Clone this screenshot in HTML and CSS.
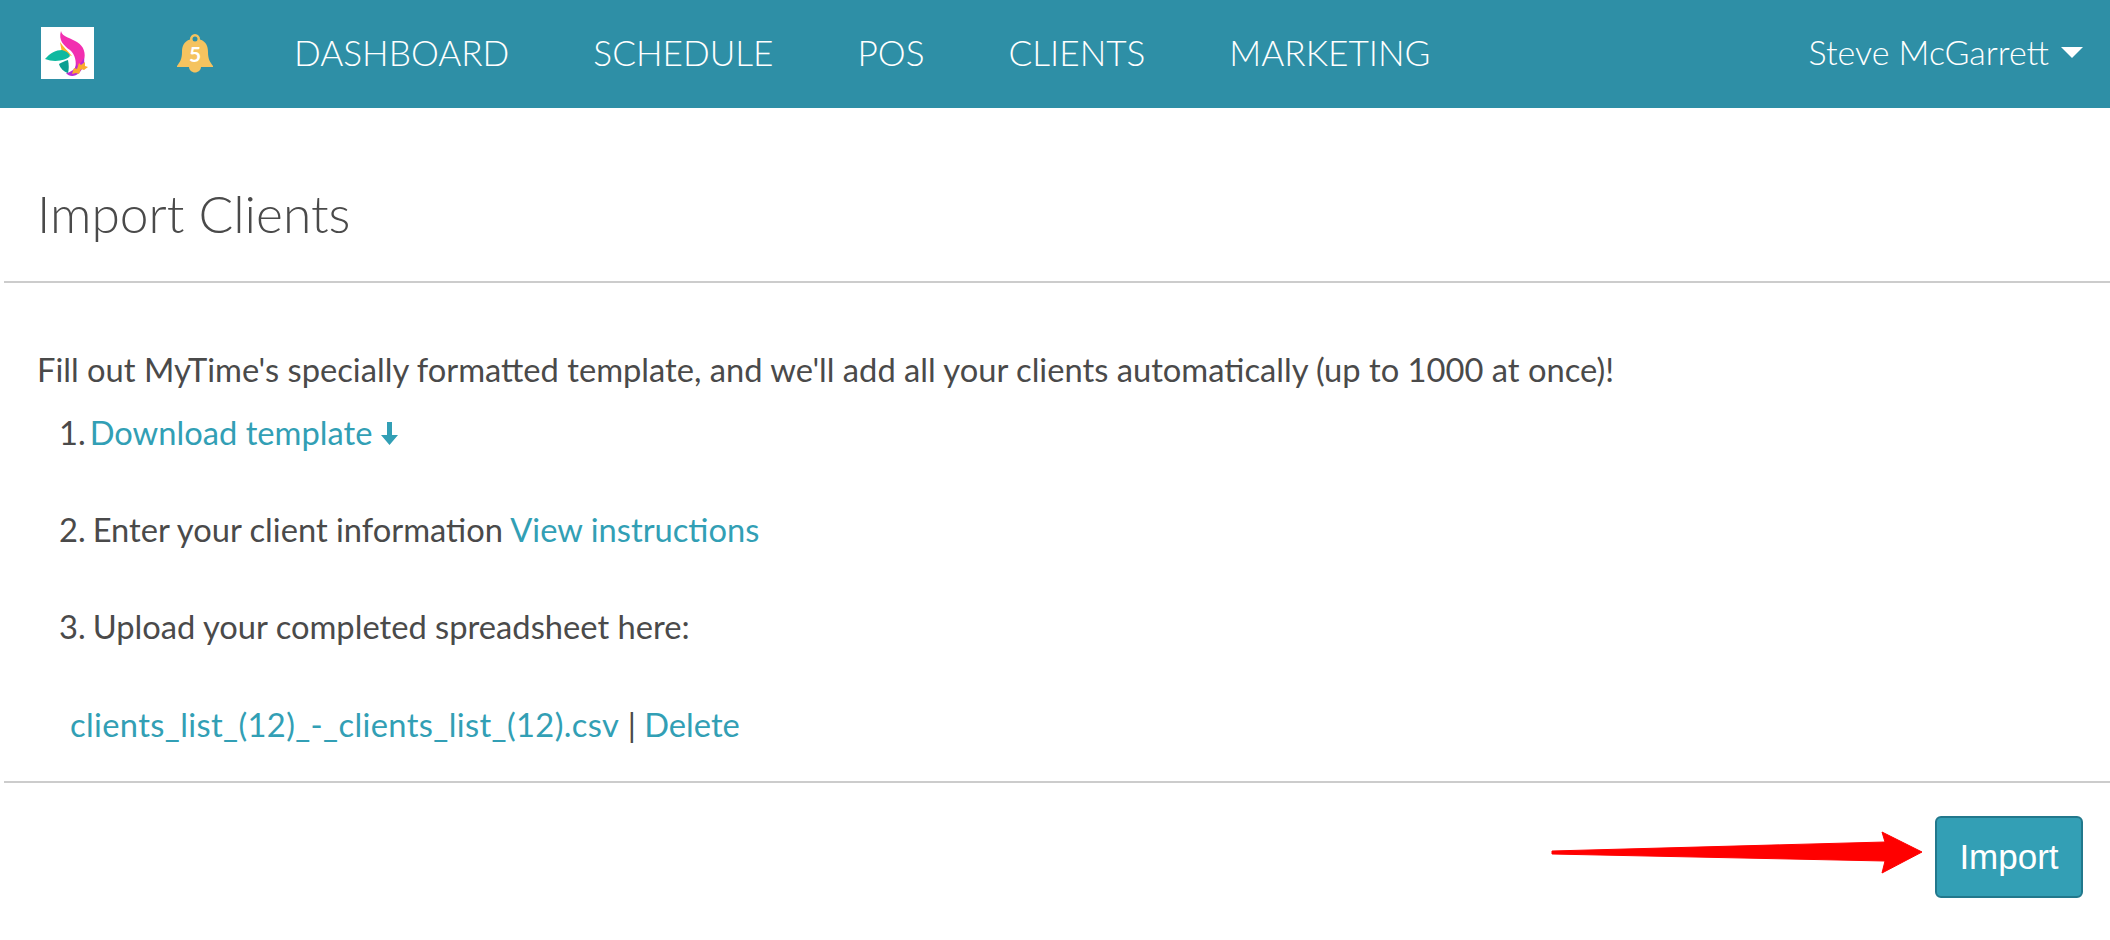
FILE: index.html
```html
<!DOCTYPE html>
<html lang="en">
<head>
    <meta charset="UTF-8">
    <title>Import Clients</title>
    <link rel="stylesheet" href="styles.css">
</head>
<body>
    <!-- Top navigation -->
    <header class="topbar">
        <div class="logo">
            <svg width="53" height="52" viewBox="0 0 53 52">
                <path d="M20 4C21 10 30 11 36 15C43 19 45 27 43 33C41 38 37 42 34 42C36 35 34 27 29 23C23 19 17 13 20 4Z" fill="#f22fb0"/>
                <path d="M33 27C37 33 36 40 32 43C29 45 27 46 25 46C28 50 34 50 38 46C42 42 44 37 43 31C41 35 38 38 36 39C36 35 35 30 33 27Z" fill="#bb2bd2"/>
                <path d="M19 15C22 20 27 24 31 29L21 26Z" fill="#fdb42c"/>
                <path d="M4 32C9 26 15 23 21 23C25 24 28 26 29 29C26 33 14 36 4 32Z" fill="#0fb9a0"/>
                <path d="M18 37C21 35 24 34 27 33C28 38 28 42 27 46C23 45 19 41 18 37Z" fill="#0c9f92"/>
                <path d="M31 47L33 41L36 42L38 36L40 38L44 35L44 39L47 40L43 43L40 42L38 47L35 46Z" fill="#fbaa30"/>
            </svg>
        </div>
        <div class="bell">
            <svg width="36" height="40" viewBox="0 0 36 40">
                <path d="M18 1a5 5 0 0 1 5 5.500C29 8.500 31 13 31 19C31 26 33 29 36 33V34H24C24 37 21 39.500 18 39.500S12 37 12 34H0V33C3 29 5 26 5 19C5 13 7 8.500 13 6.500A5 5 0 0 1 18 1Z" fill="#f5c35f"/>
                <circle cx="18" cy="6" r="2.500" fill="#2e8fa6"/>
            </svg>
            <span class="bell-count">5</span>
        </div>
        <nav class="main-nav">
            <a href="#">DASHBOARD</a>
            <a href="#">SCHEDULE</a>
            <a href="#">POS</a>
            <a href="#">CLIENTS</a>
            <a href="#">MARKETING</a>
        </nav>
        <a href="#" class="user-menu">Steve McGarrett <span class="caret"></span></a>
    </header>

    <!-- Import panel -->
    <main>
        <h1 class="page-title">Import Clients</h1>
        <section class="panel-body">
            <p class="intro">Fill out MyTime's specially formatted template, and we'll add all your clients automatically (up to 1000 at once)!</p>
            <ul class="steps">
                <li><span class="step-num">1.</span><a href="#">Download template</a>
                    <svg class="down-arrow" width="17" height="23" viewBox="0 0 17 23"><path d="M6 0H11V13H17L8.500 23L0 13H6Z" fill="#329fb5"/></svg>
                </li>
                <li><span class="step-num">2.</span>Enter your client information <a href="#">View instructions</a></li>
                <li><span class="step-num">3.</span>Upload your completed spreadsheet here:</li>
            </ul>
            <p class="file-row"><a href="#" class="file-name">clients_list_(12)_-_clients_list_(12).csv</a> | <a href="#">Delete</a></p>
        </section>
        <footer class="panel-footer">
            <button class="import-btn">Import</button>
        </footer>
    </main>

    <!-- Red annotation arrow -->
    <svg class="annotation" width="380" height="48" viewBox="0 0 380 48">
        <path d="M1 21L334 12L331 2L371 22L331 43L334 31L1 24Z" fill="#ff0000" stroke="#ff0000" stroke-linejoin="round"/>
    </svg>
</body>
</html>
```

FILE: styles.css
```css
* {
    box-sizing: border-box;
}
body {
    margin: 0;
    font-family: "Lato", "Open Sans", sans-serif;
    color: #4a4a4a;
    background: #fff;
    height: 940px;
    overflow: hidden;
    position: relative;
}
a {
    color: #329fb5;
    text-decoration: none;
}

/* Top navigation */
.topbar {
    height: 108px;
    background: #2e8fa6;
    display: flex;
    align-items: center;
    padding: 0 27px 0 41px;
}
.logo {
    width: 53px;
    height: 52px;
    background: #fff;
    margin-top: -3px;
}
.logo svg {
    display: block;
}
.bell {
    position: relative;
    width: 36px;
    height: 40px;
    margin-left: 83px;
    margin-top: -2px;
}
.bell-count {
    position: absolute;
    left: 0;
    right: 0;
    top: 9px;
    text-align: center;
    color: #fff;
    font-size: 21px;
    font-weight: 700;
    line-height: 24px;
}
.main-nav {
    display: flex;
    gap: 84px;
    margin-left: 81px;
    font-size: 35.200px;
    font-weight: 300;
    margin-top: -5px;
}
.main-nav a {
    color: #fff;
}
.user-menu {
    margin-left: auto;
    color: #fff;
    font-size: 34px;
    font-weight: 300;
    margin-top: -6px;
    display: flex;
    align-items: center;
    gap: 12px;
}
.caret {
    width: 0;
    height: 0;
    border-left: 11px solid transparent;
    border-right: 11px solid transparent;
    border-top: 11px solid #fff;
    margin-top: 2px;
}

/* Panel */
main {
    padding-left: 4px;
}
.page-title {
    margin: 0;
    height: 175px;
    border-bottom: 2px solid #ccc;
    padding: 80px 0 0 33px;
    font-size: 51.500px;
    line-height: 50px;
    font-weight: 300;
}
.panel-body {
    height: 500px;
    border-bottom: 2px solid #ccc;
    padding: 70px 0 0 33px;
    font-size: 32.700px;
    line-height: 34px;
}
.intro {
    margin: 0;
}
.steps {
    margin: 0;
    padding: 0 0 0 22px;
    list-style: none;
}
.steps li {
    height: 97px;
    padding-top: 28px;
}
.steps li:first-child {
    height: 98px;
    padding-top: 29px;
}
.step-num {
    margin-right: 7px;
}
.steps li:first-child .step-num {
    margin-right: 4px;
}
.down-arrow {
    vertical-align: 0;
}
.file-row {
    margin: 29px 0 0 33px;
}
.file-name {
    letter-spacing: 0.360px;
}
.panel-footer {
    display: flex;
    justify-content: flex-end;
    padding: 33px 27px 0 0;
}
.import-btn {
    width: 148px;
    height: 82px;
    background: #339fb5;
    border: 2px solid #22788c;
    border-radius: 6px;
    color: #fff;
    font-family: "Liberation Sans", Arial, sans-serif;
    font-size: 35px;
}

/* Annotation sits over the page */
.annotation {
    position: absolute;
    left: 1551px;
    top: 830px;
}
```
